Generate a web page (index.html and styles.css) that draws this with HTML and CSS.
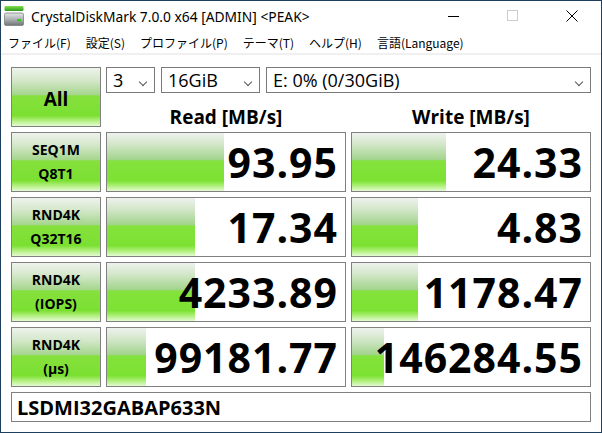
FILE: index.html
```html
<!DOCTYPE html>
<html lang="ja">
<head>
  <meta charset="UTF-8" />
  <title>CrystalDiskMark 7.0.0 x64 [ADMIN] &lt;PEAK&gt;</title>
  <link rel="stylesheet" href="styles.css">
</head>
<body>

<div class="window">
  <div class="titlebar">
    <svg class="app-icon" width="20" height="20" viewBox="0 0 20 20">
      <defs>
        <linearGradient id="led" x1="0" y1="0" x2="0" y2="1">
          <stop offset="0" stop-color="#7fe04a"/>
          <stop offset="1" stop-color="#2f9a1e"/>
        </linearGradient>
        <linearGradient id="case" x1="0" y1="0" x2="0" y2="1">
          <stop offset="0" stop-color="#e4e6e6"/>
          <stop offset="0.5" stop-color="#aeb2b4"/>
          <stop offset="1" stop-color="#6e7476"/>
        </linearGradient>
      </defs>
      <rect x="0.5" y="0" width="19" height="5" rx="1" fill="url(#led)"/>
      <rect x="0.5" y="7" width="19" height="12.5" rx="1.5" fill="url(#case)" stroke="#7b8183" stroke-width="0.8"/>
      <rect x="13" y="13" width="4" height="2.5" fill="#3cc82a"/>
    </svg>
    <span class="title">CrystalDiskMark 7.0.0 x64 [ADMIN] &lt;PEAK&gt;</span>
    <div class="controls">
      <span class="ctl"><svg width="12" height="12" viewBox="0 0 12 12"><path d="M0 6.5H11" stroke="#000" stroke-width="1"/></svg></span>
      <span class="ctl"><svg width="12" height="12" viewBox="0 0 12 12"><rect x="0.5" y="0.5" width="10" height="10" fill="none" stroke="#cccccc"/></svg></span>
      <span class="ctl"><svg width="12" height="12" viewBox="0 0 12 12"><path d="M0.5 0.5L11.5 11.5M11.5 0.5L0.5 11.5" stroke="#000" stroke-width="1"/></svg></span>
    </div>
  </div>

  <div class="menubar">
    <span>ファイル(F)</span>
    <span>設定(S)</span>
    <span>プロファイル(P)</span>
    <span>テーマ(T)</span>
    <span>ヘルプ(H)</span>
    <span>言語(Language)</span>
  </div>

  <div class="client">
    <div class="board">
      <div class="btn btn-all">All</div>

      <div class="top">
        <div class="combos">
          <div class="combo combo-count">3<i class="chev"></i></div>
          <div class="combo combo-size">16GiB<i class="chev"></i></div>
          <div class="combo combo-drive">E: 0% (0/30GiB)<i class="chev"></i></div>
        </div>
        <div class="heads">
          <div class="head">Read [MB/s]</div>
          <div class="head">Write [MB/s]</div>
        </div>
      </div>

      <div class="btn btn-test">SEQ1M<br>Q8T1</div>
      <div class="meter"><div class="bar" style="width:117px"></div><span class="value">93.95</span></div>
      <div class="meter"><div class="bar" style="width:94px"></div><span class="value">24.33</span></div>

      <div class="btn btn-test">RND4K<br>Q32T16</div>
      <div class="meter"><div class="bar" style="width:88px"></div><span class="value">17.34</span></div>
      <div class="meter"><div class="bar" style="width:66px"></div><span class="value">4.83</span></div>

      <div class="btn btn-test">RND4K<br>(IOPS)</div>
      <div class="meter"><div class="bar" style="width:88px"></div><span class="value">4233.89</span></div>
      <div class="meter"><div class="bar" style="width:66px"></div><span class="value">1178.47</span></div>

      <div class="btn btn-test">RND4K<br>(μs)</div>
      <div class="meter"><div class="bar" style="width:39px"></div><span class="value">99181.77</span></div>
      <div class="meter"><div class="bar" style="width:32px"></div><span class="value">146284.55</span></div>

      <div class="comment">LSDMI32GABAP633N</div>
    </div>
  </div>
</div>

</body>
</html>
```

FILE: styles.css
```css
body { margin: 0; background: #fff; font-family: "Open Sans", "Noto Sans CJK JP", sans-serif; color: #000; }

.window { width: 600px; height: 431px; border: 1px solid #1f3f5f; background: #fff; display: flex; flex-direction: column; }

/* title bar */
.titlebar { height: 30px; display: flex; align-items: center; }
.app-icon { margin: 0 7px 0 3px; }
.title { font-family: "Noto Sans", sans-serif; font-size: 13.8px; color: #000; }
.controls { margin-left: auto; display: flex; height: 100%; }
.ctl { width: 59px; display: flex; align-items: center; justify-content: center; }

/* menu */
.menubar { height: 24px; display: flex; align-items: center; gap: 15px; padding: 1px 0 0 7px; box-sizing: border-box; font-family: "Noto Sans CJK JP", sans-serif; font-size: 12px; border-bottom: 2px solid #f0f0f0; }

/* main panel */
.client { padding: 12px 10px 10px 10px; }
.board { display: grid; grid-template-columns: 90px 240px 240px; grid-template-rows: repeat(5, 60px) 30px; gap: 5px; }

.btn, .meter, .combo, .comment { box-sizing: border-box; border: 1px solid #808080; }

.btn { display: flex; align-items: center; justify-content: center; text-align: center; font-weight: bold;
  background: linear-gradient(to bottom, #eef3ec 0%, #d6e8cc 20%, #a6d68e 46%, #86e03c 48%, #7be032 82%, #aeee78 90%, #e4fbd2 100%); }
.btn-all { font-size: 19px; padding-top: 3px; }
.btn-test { font-size: 14px; line-height: 24px; }

.top { grid-column: 2 / 4; display: flex; flex-direction: column; }
.combos { display: flex; gap: 6px; height: 30px; }
.combo { position: relative; display: flex; align-items: center; padding-left: 6px; font-size: 18px; border-color: #7a7a7a; background: #fff; }
.combo-count { width: 49px; }
.combo-size { width: 99px; }
.combo-drive { flex: 1; }
.chev { position: absolute; right: 8px; top: 11px; width: 5px; height: 5px; border-right: 1px solid #555; border-bottom: 1px solid #555; transform: rotate(45deg); }

.heads { flex: 1; display: grid; grid-template-columns: 240px 240px; gap: 5px; }
.head { text-align: center; font-size: 19px; font-weight: bold; line-height: 24px; padding-top: 12px; }

.meter { position: relative; display: flex; align-items: center; justify-content: flex-end; padding-right: 8px; background: #fff; }
.bar { position: absolute; left: 0; top: 0; bottom: 0;
  background: linear-gradient(to bottom, #eef2ee 0%, #d2e6c8 20%, #a2d48c 46%, #84e23c 48%, #7ce232 82%, #a8ee70 90%, #e4fbd2 100%); }
.value { position: relative; font-size: 41px; font-weight: bold; line-height: 1; letter-spacing: 1px; margin-right: -1px; }

.comment { grid-column: 1 / 4; display: flex; align-items: center; padding-left: 5px; font-size: 20px; font-weight: bold; }
```
